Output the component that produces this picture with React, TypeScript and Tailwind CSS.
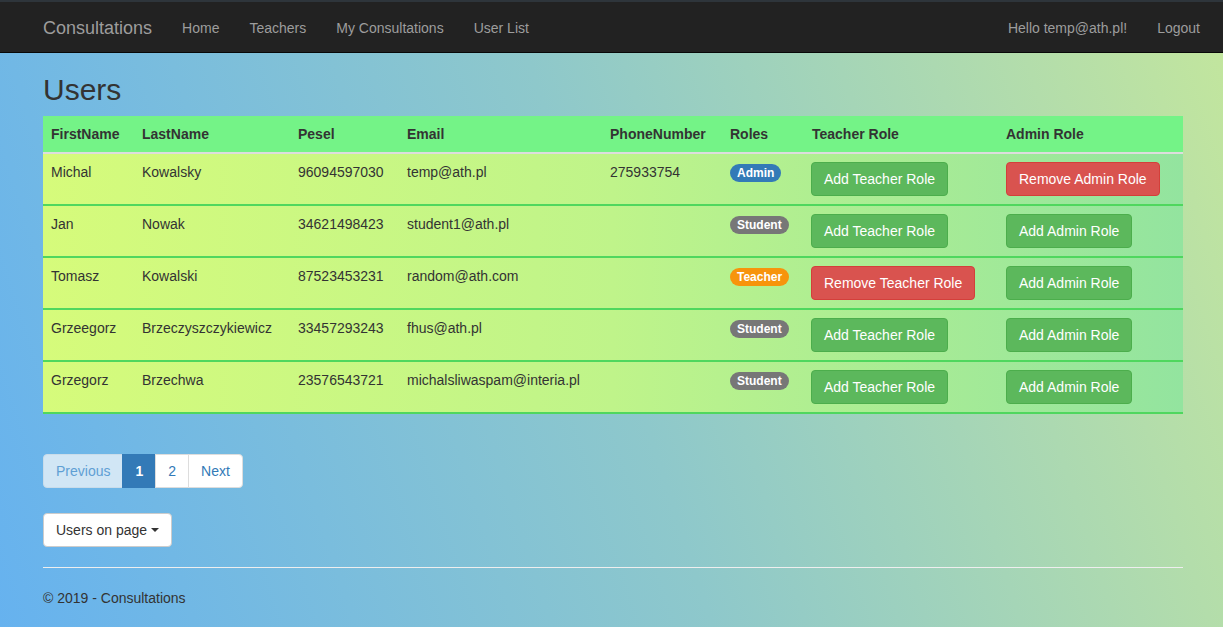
import React from 'react';

type Role = 'Admin' | 'Student' | 'Teacher';

const users: { first: string; last: string; pesel: string; email: string; phone: string; role: Role }[] = [
  { first: 'Michal', last: 'Kowalsky', pesel: '96094597030', email: 'temp@ath.pl', phone: '275933754', role: 'Admin' },
  { first: 'Jan', last: 'Nowak', pesel: '34621498423', email: 'student1@ath.pl', phone: '', role: 'Student' },
  { first: 'Tomasz', last: 'Kowalski', pesel: '87523453231', email: 'random@ath.com', phone: '', role: 'Teacher' },
  { first: 'Grzeegorz', last: 'Brzeczyszczykiewicz', pesel: '33457293243', email: 'fhus@ath.pl', phone: '', role: 'Student' },
  { first: 'Grzegorz', last: 'Brzechwa', pesel: '23576543721', email: 'michalsliwaspam@interia.pl', phone: '', role: 'Student' },
];

const cols = 'grid grid-cols-[91px_156px_109px_203px_120px_82px_194px_185px]';

const badgeColor: Record<Role, string> = {
  Admin: 'bg-[#337ab7]',
  Student: 'bg-[#777777]',
  Teacher: 'bg-[#f7940c]',
};

const Btn = ({ danger, children }: { danger?: boolean; children: React.ReactNode }) => (
  <button
    className={`h-[34px] px-3 rounded text-white text-[14px] leading-5 border ${
      danger ? 'bg-[#d9534f] border-[#d43f3a]' : 'bg-[#5cb85c] border-[#4cae4c]'
    }`}
  >
    {children}
  </button>
);

const NavLink = ({ children }: { children: React.ReactNode }) => (
  <a className="px-[15px] py-[15px] leading-5 text-[14px] text-[#9d9d9d]">{children}</a>
);

export default function App() {
  return (
    <div
      className="min-h-[627px] text-[#333] text-[14px] leading-5 bg-[linear-gradient(72deg,#66b2ef_0%,#8ec8cb_50%,#c3e69d_100%)]"
      style={{ fontFamily: '"Liberation Sans", Arial, sans-serif' }}
    >
      {/* navbar */}
      <div className="border-t-2 border-[#2e353b] bg-[#222] border-b border-b-[#080808] h-[53px] pt-[2px] flex items-center justify-between pl-[28px] pr-[8px]">
        <div className="flex items-center">
          <a className="px-[15px] text-[18px] leading-5 text-[#9d9d9d]">Consultations</a>
          <NavLink>Home</NavLink>
          <NavLink>Teachers</NavLink>
          <NavLink>My Consultations</NavLink>
          <NavLink>User List</NavLink>
        </div>
        <div className="flex items-center">
          <NavLink>Hello temp@ath.pl!</NavLink>
          <NavLink>Logout</NavLink>
        </div>
      </div>

      <div className="ml-[43px] w-[1140px]">
        <h2 className="mt-5 mb-[10px] text-[30px] leading-[33px] font-medium">Users</h2>

        {/* table */}
        <div className="mb-5">
          <div className={`${cols} bg-[#74f387] border-b-2 border-[#dddddd] font-bold`}>
            {['FirstName', 'LastName', 'Pesel', 'Email', 'PhoneNumber', 'Roles', 'Teacher Role', 'Admin Role'].map((h) => (
              <div key={h} className="p-2">{h}</div>
            ))}
          </div>
          {users.map((u) => (
            <div
              key={u.pesel}
              className={`${cols} h-[52px] border-b-2 border-[#4fd75e] bg-[linear-gradient(90deg,#d6fb7b,#bff48a_50%,#93e49f)]`}
            >
              <div className="p-2">{u.first}</div>
              <div className="p-2">{u.last}</div>
              <div className="p-2">{u.pesel}</div>
              <div className="p-2">{u.email}</div>
              <div className="p-2">{u.phone}</div>
              <div className="p-2">
                <span
                  className={`inline-block mt-[2px] px-[7px] py-[3px] rounded-[10px] text-[12px] leading-3 font-bold text-white ${badgeColor[u.role]}`}
                >
                  {u.role}
                </span>
              </div>
              <div className="p-2 pl-[7px]">
                {u.role === 'Teacher' ? <Btn danger>Remove Teacher Role</Btn> : <Btn>Add Teacher Role</Btn>}
              </div>
              <div className="p-2">
                {u.role === 'Admin' ? <Btn danger>Remove Admin Role</Btn> : <Btn>Add Admin Role</Btn>}
              </div>
            </div>
          ))}
        </div>

        {/* pagination */}
        <div className="flex mt-[40px] h-[34px]">
          <span className="px-3 py-[6px] leading-5 bg-[#d1e6f5] text-[#5f9fd4] border border-[#c9dcea] rounded-l">Previous</span>
          <span className="-ml-px px-3 py-[6px] leading-5 bg-[#337ab7] text-white border border-[#337ab7] font-bold">1</span>
          <span className="-ml-px px-3 py-[6px] leading-5 bg-white text-[#337ab7] border border-[#ddd]">2</span>
          <span className="-ml-px px-3 py-[6px] leading-5 bg-white text-[#337ab7] border border-[#ddd] rounded-r">Next</span>
        </div>

        <div className="mt-[25px]">
          <button className="h-[34px] px-3 bg-white border border-[#ccc] rounded text-[#333] flex items-center gap-1">
            Users on page
            <span className="inline-block w-0 h-0 border-x-4 border-x-transparent border-t-4 border-t-[#333]" />
          </button>
        </div>

        <hr className="mt-5 border-t border-[#eeeeee]" />
        <p className="py-5 leading-5">© 2019 - Consultations</p>
      </div>
    </div>
  );
}
